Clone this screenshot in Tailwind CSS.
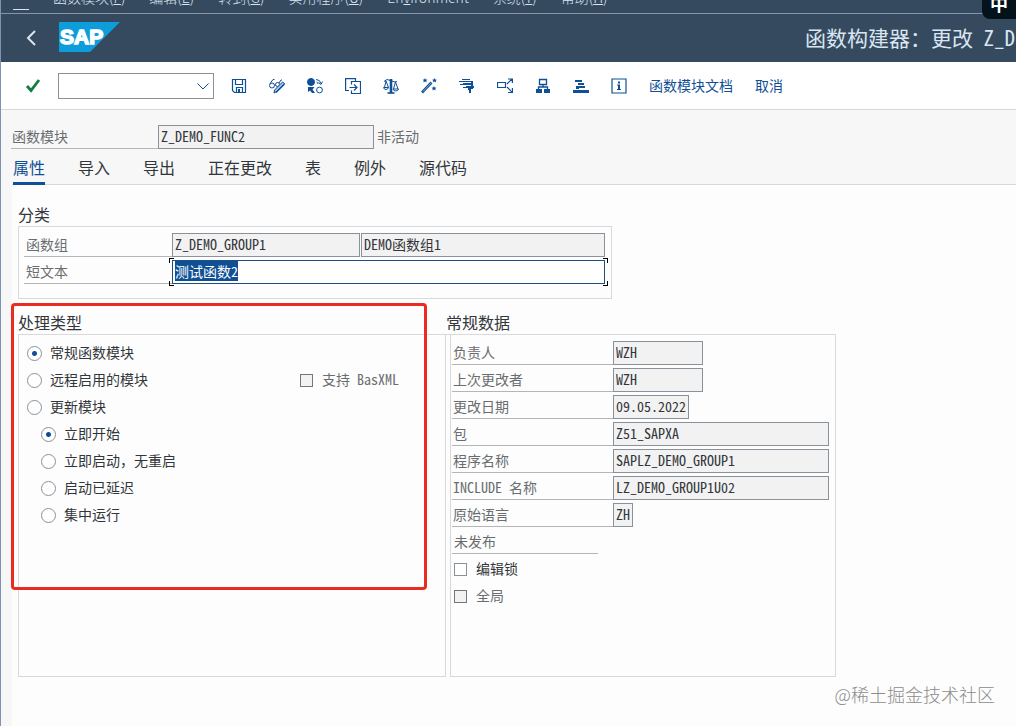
<!DOCTYPE html>
<html lang="zh-CN">
<head>
<meta charset="utf-8">
<meta name="viewport" content="width=device-width, initial-scale=1">
<title>函数构建器：更改 Z_DEMO_FUNC2</title>
<script src="https://cdn.jsdelivr.net/npm/@tailwindcss/browser@4"></script>
</head>
<body class="flex min-h-screen flex-col overflow-x-hidden border-l border-[#7d93b2] bg-[#f7f7f7] font-['Noto_Sans_Mono_CJK_SC','Noto_Sans_CJK_SC',monospace] text-sm font-light text-[#32363a]">

<header class="relative bg-[#354a5f] text-[#d9e6f2]">
  <nav class="flex h-[14px] items-end gap-6 overflow-hidden whitespace-nowrap border-b border-[#8396a8] pb-[6px] pl-3 font-['Noto_Sans_CJK_SC',sans-serif] leading-5">
    <button type="button" aria-label="菜单" class="-mb-[3px] h-3 w-4 shrink-0 border-b border-[#d9e6f2]"></button>
    <a href="#">函数模块(<u>F</u>)</a>
    <a href="#">编辑(<u>E</u>)</a>
    <a href="#">转到(<u>G</u>)</a>
    <a href="#">实用程序(<u>U</u>)</a>
    <a href="#">En<u>v</u>ironment</a>
    <a href="#">系统(<u>Y</u>)</a>
    <a href="#">帮助(<u>H</u>)</a>
  </nav>
  <div class="flex h-12 items-center pl-6">
    <button type="button" aria-label="返回" class="mr-5 shrink-0">
      <svg width="14" height="16" viewBox="0 0 14 16" fill="none" stroke="#d9e6f2" stroke-width="2"><path d="M10 1 3 8l7 7"/></svg>
    </button>
    <svg class="mb-0.5 shrink-0" width="61" height="30" viewBox="0 0 61 30" role="img" aria-label="SAP">
      <path d="M0 0h61L31 30H0z" fill="#0d9ddb"/>
      <text x="1" y="22" font-family="Liberation Sans, sans-serif" font-weight="700" font-size="21" fill="#fff" stroke="#fff" stroke-width="1.500">SAP</text>
    </svg>
    <h1 class="ml-auto w-[211px] shrink-0 overflow-hidden whitespace-nowrap pb-0.5 text-[21px] leading-8">函数构建器：更改 Z_DEMO_FUNC2</h1>
  </div>
  <div class="absolute right-0 top-0 flex h-[19px] w-[34px] items-end justify-center overflow-hidden rounded-bl-lg bg-[#04131b] pb-[6px] text-lg font-bold leading-5 text-white">中</div>
</header>

<div class="flex h-12 items-center border-b border-[#d9d9d9] bg-white pl-6 font-['Noto_Sans_CJK_SC',sans-serif] font-normal text-[#0f4f96]">
  <button type="button" aria-label="确认" class="mr-[17px]">
    <svg width="16" height="16" viewBox="0 0 16 16" fill="none" stroke="#107e3e" stroke-width="2.800"><path d="M2 8l4 4.500L14 2"/></svg>
  </button>
  <div class="relative mr-[17px]">
    <select aria-label="命令" class="block h-[26px] w-[156px] appearance-none border border-[#89919a] bg-white"><option></option></select>
    <svg class="pointer-events-none absolute right-1 top-[9px]" width="14" height="9" viewBox="0 0 14 9" fill="none" stroke="#0f4f96"><path d="M1.500 1.500 7 7l5.500-5.500"/></svg>
  </div>
  <div class="mr-[22px] flex items-center gap-[22px]">
    <button type="button" aria-label="保存"><svg width="16" height="16" viewBox="0 0 16 16" fill="none" stroke="currentColor" stroke-width="1.200"><path d="M1.500 1.500h13v13h-11l-2-2zM4.500 1.500v5h7v-5M5.500 14.500v-5h6v5"/><path d="M7 11h2v3.500H7z" fill="currentColor" stroke="none"/></svg></button>
    <button type="button" aria-label="显示/更改"><svg width="16" height="16" viewBox="0 0 16 16" fill="none" stroke="currentColor"><circle cx="3" cy="7.500" r="2.500"/><circle cx="8.500" cy="6.500" r="2"/><path d="M1 5.500 4 1.500h1.500M5.500 7h1M10 5l2-3h1"/><path d="M15.500 5.500 7.500 13.500l-2.500 1.500.500-3 8-8z" fill="#a9c6e6"/><path d="M15.500 6 7 14.500" stroke-width="1.500"/></svg></button>
    <button type="button" aria-label="激活"><svg width="16" height="16" viewBox="0 0 16 16" fill="none" stroke="currentColor"><circle cx="4" cy="4" r="3.500" fill="currentColor"/><circle cx="12.500" cy="12" r="2.900"/><path d="M1 9h6.500L5.500 11.500 8 15H5L3 12.500 1 14z" fill="currentColor" stroke="none"/><path d="M9 1.500q4 0 5 4M15.500 3.500l-1.500 3-2.500-2M9.500 4q1.500.500 1.500 2"/></svg></button>
    <button type="button" aria-label="其他对象"><svg width="16" height="16" viewBox="0 0 16 16" fill="none" stroke="currentColor" stroke-width="1.200"><path d="M4 12.500H.600V.600h9.900V3.500M6.500 6.500v-3h9v12h-9v-3M4.500 9.500H12M9 6.500l3 3-3 3"/></svg></button>
    <button type="button" aria-label="检查"><svg width="16" height="16" viewBox="0 0 16 16" fill="none" stroke="currentColor"><path d="M8 1v14" stroke-width="2.600"/><path d="M4.500 15h7" stroke-width="1.600"/><path d="M1 3.500 4 1.500l8 2.500 2-.500M3 3 1.500 9.500M3 3l2.500 6.500M12.500 4l-2 7M12.500 4l2.500 7M.500 9.500h5q-.500 2-2.500 2t-2.500-2zM10 11h5.500q-.500 2-2.700 2T10 11z"/></svg></button>
    <button type="button" aria-label="格式化"><svg width="16" height="16" viewBox="0 0 16 16" fill="none" stroke="currentColor"><path d="M10.500 4.500 1 14.500" stroke-width="2.600"/><path d="M10 5 2 13.500" stroke="#a9c6e6" stroke-width=".700"/><path d="m4 0 .700 1.600 1.800.100-1.300 1.100.400 1.700L4 3.600l-1.600.900.400-1.700-1.300-1.100 1.800-.100zM13.500 0l.700 1.600 1.800.100-1.300 1.100.400 1.700-1.600-.900-1.600.900.400-1.700L11 1.700l1.800-.100zM13 8l.700 1.600 1.800.100-1.300 1.100.400 1.700-1.600-.900-1.600.900.400-1.700-1.300-1.100 1.800-.100z" fill="currentColor" stroke="none"/></svg></button>
    <button type="button" aria-label="测试"><svg width="16" height="16" viewBox="0 0 16 16" fill="currentColor"><path d="M3 1h8v1H3zM0 3h14v1H0zM4 5h10v2H4zM1 6h4v1H1zM7 8h8v2H7zM4 9h3v1H4zM9 10h3v5h-2v-3H9zM12 3h2v8h-2z"/></svg></button>
    <button type="button" aria-label="使用位置清单"><svg width="16" height="16" viewBox="0 0 16 16" fill="none" stroke="currentColor" stroke-width="1.200"><path d="M.500 4.500h8v5h-8zM10 6l5-5M11 1h4.400v4M10 9l5 5M11 14.500h4.400V10"/></svg></button>
    <button type="button" aria-label="层次"><svg width="16" height="16" viewBox="0 0 16 16" fill="none" stroke="currentColor" stroke-width="1.300"><path d="M4.500 1.500h7v5h-7zM8 6.500V9M3.500 12V9h9v3"/><path d="M1 11h6v4H1zM9 11h6v4H9z" fill="currentColor" stroke="none"/></svg></button>
    <button type="button" aria-label="堆栈"><svg width="16" height="16" viewBox="0 0 16 16" fill="currentColor"><path d="M2 2h7v2H2zM5 5h6v2H5zM3 8h9v2H3zM0 12h16v3H0zM3 10h3v1H3z"/></svg></button>
    <button type="button" aria-label="信息"><svg width="16" height="16" viewBox="0 0 16 16" fill="none" stroke="currentColor" stroke-width="1.200"><path d="M1 1h14v14H1z"/><path d="M7 3.500h2v2H7zM6 6.500h3V11h1v1H6v-1h1V7.500H6z" fill="currentColor" stroke="none"/></svg></button>
  </div>
  <button type="button" class="mr-[22px] whitespace-nowrap pb-0.5">函数模块文档</button>
  <button type="button" class="whitespace-nowrap pb-0.5">取消</button>
</div>

<div class="flex items-end pl-[10px] pt-[15px]">
  <label for="fm" class="h-6 w-[147px] border-b border-[#b5b5b5] pl-px leading-[22px] text-[#6a6d70]">函数模块</label>
  <input id="fm" readonly value="Z_DEMO_FUNC2" class="h-6 w-[216px] border border-[#89919a] bg-[#f2f2f2] px-[2px] pb-0.5">
  <span class="ml-[3px] h-6 leading-[22px] text-[#6a6d70]">非活动</span>
</div>

<nav class="ml-[11px] flex h-9 gap-[33px] border-b border-[#d9d9d9] pl-px text-base leading-6">
  <a href="#" aria-current="page" class="-mb-px border-b-[3px] border-[#0f4f96] pt-[6px] text-[#0f4f96]">属性</a>
  <a href="#" class="pt-[6px]">导入</a>
  <a href="#" class="pt-[6px]">导出</a>
  <a href="#" class="pt-[6px]">正在更改</a>
  <a href="#" class="pt-[6px]">表</a>
  <a href="#" class="pt-[6px]">例外</a>
  <a href="#" class="pt-[6px]">源代码</a>
</nav>

<main class="relative ml-[11px] flex-1 bg-[#fdfdfd] pl-[6px] pt-[17px]">
  <section>
    <h2 class="text-base leading-6">分类</h2>
    <div class="flex w-[594px] flex-col gap-[3px] border border-[#d9d9d9] pb-[14px] pl-[5px] pt-[6px]">
      <div class="flex">
        <label for="fg" class="h-6 w-[148px] border-b border-[#b5b5b5] pl-[2px] leading-[22px] text-[#6a6d70]">函数组</label>
        <input id="fg" readonly value="Z_DEMO_GROUP1" class="mr-px h-6 w-[188px] border border-[#89919a] bg-[#f2f2f2] px-[2px] pb-0.5">
        <input aria-label="函数组描述" readonly value="DEMO函数组1" class="h-6 w-[244px] border border-[#89919a] bg-[#f2f2f2] px-[2px] pb-0.5">
      </div>
      <div class="flex">
        <label for="st" class="h-6 w-[148px] border-b border-[#b5b5b5] pl-[2px] leading-[22px] text-[#6a6d70]">短文本</label>
        <div class="relative">
          <input id="st" value="测试函数2" class="block h-6 w-[433px] border border-[#1f4e82] bg-white px-[2px] pb-0.5 outline-none selection:bg-[#0f5094] selection:text-white">
          <span class="pointer-events-none absolute -left-[3px] -top-[2px] size-[5px] border-l border-t border-black"></span>
          <span class="pointer-events-none absolute -right-[3px] -top-[2px] size-[5px] border-r border-t border-black"></span>
          <span class="pointer-events-none absolute -bottom-[2px] -left-[3px] size-[5px] border-b border-l border-black"></span>
          <span class="pointer-events-none absolute -bottom-[2px] -right-[3px] size-[5px] border-b border-r border-black"></span>
        </div>
      </div>
    </div>
  </section>

  <div class="mt-[11px] flex">
    <section class="flex w-[428px] flex-col">
      <h2 class="text-base leading-6">处理类型</h2>
      <div class="h-[343px] border border-[#d9d9d9] pl-2 pt-[5px]">
        <div class="flex h-[27px] items-center">
          <label class="flex items-center gap-2"><input type="radio" name="kind" checked class="size-[15px] appearance-none rounded-full border border-[#89919a] bg-white bg-radial from-[#0f4f96] from-[2px] to-white to-[3px]"><span class="pb-1">常规函数模块</span></label>
        </div>
        <div class="flex h-[27px] items-center">
          <label class="flex w-[273px] items-center gap-2"><input type="radio" name="kind" class="size-[15px] appearance-none rounded-full border border-[#89919a] bg-white"><span class="pb-1">远程启用的模块</span></label>
          <label class="flex items-center gap-[9px] text-[#6a6d70]"><input type="checkbox" disabled class="size-[13px] appearance-none border border-[#74777a] bg-[#f2f2f2]"><span class="pb-1">支持 BasXML</span></label>
        </div>
        <div class="flex h-[27px] items-center">
          <label class="flex items-center gap-2"><input type="radio" name="kind" class="size-[15px] appearance-none rounded-full border border-[#89919a] bg-white"><span class="pb-1">更新模块</span></label>
        </div>
        <div class="flex h-[27px] items-center pl-[14px]">
          <label class="flex items-center gap-2"><input type="radio" name="update" checked class="size-[15px] appearance-none rounded-full border border-[#89919a] bg-white bg-radial from-[#0f4f96] from-[2px] to-white to-[3px]"><span class="pb-1">立即开始</span></label>
        </div>
        <div class="flex h-[27px] items-center pl-[14px]">
          <label class="flex items-center gap-2"><input type="radio" name="update" class="size-[15px] appearance-none rounded-full border border-[#89919a] bg-white"><span class="pb-1">立即启动，无重启</span></label>
        </div>
        <div class="flex h-[27px] items-center pl-[14px]">
          <label class="flex items-center gap-2"><input type="radio" name="update" class="size-[15px] appearance-none rounded-full border border-[#89919a] bg-white"><span class="pb-1">启动已延迟</span></label>
        </div>
        <div class="flex h-[27px] items-center pl-[14px]">
          <label class="flex items-center gap-2"><input type="radio" name="update" class="size-[15px] appearance-none rounded-full border border-[#89919a] bg-white"><span class="pb-1">集中运行</span></label>
        </div>
      </div>
    </section>

    <section class="flex w-[390px] flex-col">
      <h2 class="text-base leading-6">常规数据</h2>
      <div class="border-t border-[#d9d9d9] pl-1">
        <div class="flex h-[342px] flex-col gap-[3px] border-x border-b border-[#d9d9d9] pl-px pt-[6px]">
          <div class="flex">
            <label for="d1" class="h-6 w-[161px] border-b border-[#b5b5b5] pl-px leading-[22px] text-[#6a6d70]">负责人</label>
            <input id="d1" readonly value="WZH" class="h-6 w-[90px] border border-[#89919a] bg-[#f2f2f2] px-[2px] pb-0.5">
          </div>
          <div class="flex">
            <label for="d2" class="h-6 w-[161px] border-b border-[#b5b5b5] pl-px leading-[22px] text-[#6a6d70]">上次更改者</label>
            <input id="d2" readonly value="WZH" class="h-6 w-[90px] border border-[#89919a] bg-[#f2f2f2] px-[2px] pb-0.5">
          </div>
          <div class="flex">
            <label for="d3" class="h-6 w-[161px] border-b border-[#b5b5b5] pl-px leading-[22px] text-[#6a6d70]">更改日期</label>
            <input id="d3" readonly value="09.05.2022" class="h-6 w-[76px] border border-[#89919a] bg-[#f2f2f2] px-[2px] pb-0.5">
          </div>
          <div class="flex">
            <label for="d4" class="h-6 w-[161px] border-b border-[#b5b5b5] pl-px leading-[22px] text-[#6a6d70]">包</label>
            <input id="d4" readonly value="Z51_SAPXA" class="h-6 w-[216px] border border-[#89919a] bg-[#f2f2f2] px-[2px] pb-0.5">
          </div>
          <div class="flex">
            <label for="d5" class="h-6 w-[161px] border-b border-[#b5b5b5] pl-px leading-[22px] text-[#6a6d70]">程序名称</label>
            <input id="d5" readonly value="SAPLZ_DEMO_GROUP1" class="h-6 w-[216px] border border-[#89919a] bg-[#f2f2f2] px-[2px] pb-0.5">
          </div>
          <div class="flex">
            <label for="d6" class="h-6 w-[161px] border-b border-[#b5b5b5] pl-px leading-[22px] text-[#6a6d70]">INCLUDE 名称</label>
            <input id="d6" readonly value="LZ_DEMO_GROUP1U02" class="h-6 w-[216px] border border-[#89919a] bg-[#f2f2f2] px-[2px] pb-0.5">
          </div>
          <div class="flex">
            <label for="d7" class="h-6 w-[161px] border-b border-[#b5b5b5] pl-px leading-[22px] text-[#6a6d70]">原始语言</label>
            <input id="d7" readonly value="ZH" class="h-6 w-5 border border-[#89919a] bg-[#f2f2f2] px-[2px] pb-0.5">
          </div>
          <p class="h-6 w-[146px] border-b border-[#b5b5b5] pl-[2px] leading-[22px] text-[#6a6d70]">未发布</p>
          <label class="flex h-6 items-center gap-[9px] pl-[2px]"><input type="checkbox" class="size-[13px] appearance-none border border-[#89919a] bg-white"><span class="pb-0.5">编辑锁</span></label>
          <label class="flex h-6 items-center gap-[9px] pl-[2px] text-[#6a6d70]"><input type="checkbox" disabled class="size-[13px] appearance-none border border-[#74777a] bg-[#f2f2f2]"><span class="pb-0.5">全局</span></label>
        </div>
      </div>
    </section>
  </div>

  <div class="pointer-events-none absolute -left-px top-[118px] h-[287px] w-[416px] rounded border-[3px] border-[#ea2b20]"></div>
  <p class="absolute bottom-4 right-[21px] font-['Noto_Sans_CJK_SC',sans-serif] text-lg leading-8 text-[#8c8c8c]">@稀土掘金技术社区</p>
</main>

<script>
  const shortText = document.getElementById('st');
  shortText.focus();
  shortText.select();
</script>
</body>
</html>
